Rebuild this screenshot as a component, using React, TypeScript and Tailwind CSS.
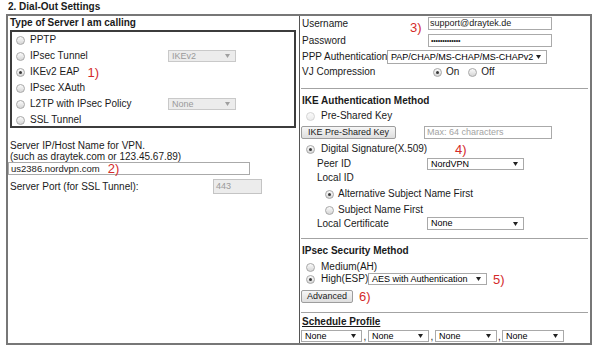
import React from "react";

const red = "text-[#d42a2a] text-[13px] leading-none";

function Radio({ checked = false, faded = false }: { checked?: boolean; faded?: boolean }) {
  return (
    <span
      className={`inline-flex items-center justify-center w-[9px] h-[9px] shrink-0 rounded-full border bg-linear-to-b ${
        faded ? "border-[#d4d4d4] from-[#fafafa] to-[#ececec]" : "border-[#a8a8a8] from-[#fbfbfb] to-[#d6d6d6]"
      }`}
    >
      {checked && <span className="w-[3px] h-[3px] rounded-full bg-[#3a3a3a]" />}
    </span>
  );
}

function Caret({ color = "#222" }: { color?: string }) {
  return (
    <svg width="5" height="4" viewBox="0 0 5 4" className="shrink-0">
      <path d="M0 0h5L2.5 4z" fill={color} />
    </svg>
  );
}

function Select({ value, w, h = 12, disabled = false }: { value: string; w: string; h?: number; disabled?: boolean }) {
  return (
    <div
      className={`flex shrink-0 items-center justify-between pl-[3px] pr-[5px] border overflow-hidden text-[9px] ${w} ${
        disabled ? "bg-[#ececec] border-[#c9c9c9] text-[#9a9a9a]" : "bg-white border-[#a9a9a9] text-black"
      }`}
      style={{ height: h }}
    >
      <span className="leading-none whitespace-nowrap">{value}</span>
      <Caret color={disabled ? "#a0a0a0" : "#222"} />
    </div>
  );
}

function Btn({ children, w }: { children: React.ReactNode; w: string }) {
  return (
    <div
      className={`flex shrink-0 items-center justify-center h-[13px] ${w} text-[9px] border border-[#9d9d9d] rounded-[2px] bg-linear-to-b from-[#f6f6f6] to-[#dedede] leading-none whitespace-nowrap`}
    >
      {children}
    </div>
  );
}

function Sep() {
  return <div className="h-px bg-[#a3a3a3] mr-[2px]" />;
}

export default function App() {
  return (
    <div
      className="w-[598px] h-[347px] bg-white text-[10px] text-[#1a1a1a] overflow-hidden whitespace-nowrap"
      style={{ fontFamily: '"Liberation Sans", Arial, sans-serif' }}
    >
      <div className="h-[14px] pl-[8px] pt-[1px] font-bold leading-[12px]">2. Dial-Out Settings</div>

      <div className="ml-[6px] w-[586px] h-[331px] border-2 border-[#777] flex">
        {/* Left column */}
        <div className="w-[292px] shrink-0 border-r border-[#555] flex flex-col">
          <div className="h-[12px] pl-[2px] pt-[1px] font-bold leading-[11px]">Type of Server I am calling</div>
          <div className="mt-[2px] ml-[2px] w-[286px] h-[98px] border-2 border-[#3c3c3c] flex flex-col">
            {[
              { label: "PPTP" },
              { label: "IPsec Tunnel", sel: "IKEv2" },
              { label: "IKEv2 EAP", checked: true, note: "1)" },
              { label: "IPsec XAuth" },
              { label: "L2TP with IPsec Policy", sel: "None" },
              { label: "SSL Tunnel" },
            ].map((r) => (
              <div key={r.label} className="h-[16px] shrink-0 flex items-center">
                <div className="w-[156px] shrink-0 flex items-center pl-[4px] gap-[5px]">
                  <Radio checked={r.checked} />
                  <span className="leading-none">{r.label}</span>
                  {r.note && <span className={`${red} ml-[3px]`}>{r.note}</span>}
                </div>
                {r.sel && <Select value={r.sel} w="w-[68px]" h={12} disabled />}
              </div>
            ))}
          </div>

          <div className="mt-[12px] h-[22px] pl-[2px] leading-[11px]">
            <div>Server IP/Host Name for VPN.</div>
            <div>(such as draytek.com or 123.45.67.89)</div>
          </div>
          <div className="w-[242px] h-[13px] border border-[#aaa] flex items-center pl-[2px] gap-[8px]">
            <span className="leading-none text-[9.5px]">us2386.nordvpn.com</span>
            <span className={red}>2)</span>
          </div>
          <div className="mt-[4px] h-[15px] flex items-center">
            <span className="w-[205px] shrink-0 pl-[2px] leading-none">Server Port (for SSL Tunnel):</span>
            <div className="w-[49px] h-[15px] border border-[#c4c4c4] bg-[#ececec] text-[#9a9a9a] text-[9px] flex items-center pl-[2px] leading-none">
              443
            </div>
          </div>
        </div>

        {/* Right column */}
        <div className="flex-1 flex flex-col pl-[1px]">
          <div className="mt-[1px] h-[13px] flex items-center">
            <span className="w-[109px] shrink-0 pl-[1px] leading-none">Username</span>
            <span className={`${red} w-[18px] shrink-0 mt-[8px]`}>3)</span>
            <div className="w-[124px] h-[13px] border border-[#aaa] flex items-center pl-[1px] text-[9px] leading-none">
              support@draytek.de
            </div>
          </div>
          <div className="mt-[4px] h-[13px] flex items-center">
            <span className="w-[127px] shrink-0 pl-[1px] leading-none">Password</span>
            <div className="w-[124px] h-[13px] border border-[#aaa] flex items-center pl-[2px] text-[7px] leading-none tracking-[-0.2px]">
              •••••••••••••
            </div>
          </div>
          <div className="mt-[3px] h-[14px] flex items-center">
            <span className="w-[86px] shrink-0 pl-[1px] leading-none">PPP Authentication</span>
            <Select value="PAP/CHAP/MS-CHAP/MS-CHAPv2" w="w-[160px]" h={14} />
          </div>
          <div className="h-[16px] flex items-center">
            <span className="w-[132px] shrink-0 pl-[1px] leading-none">VJ Compression</span>
            <Radio checked />
            <span className="ml-[4px] leading-none">On</span>
            <span className="ml-[9px] flex">
              <Radio />
            </span>
            <span className="ml-[4px] leading-none">Off</span>
          </div>

          <div className="mt-[8px]">
            <Sep />
          </div>

          <div className="mt-[6px] h-[12px] pl-[1px] flex items-center font-bold leading-none">IKE Authentication Method</div>
          <div className="mt-[3px] h-[12px] flex items-center pl-[5px] gap-[6px]">
            <Radio faded />
            <span className="leading-none">Pre-Shared Key</span>
          </div>
          <div className="mt-[4px] h-[13px] flex items-center">
            <Btn w="w-[95px]">IKE Pre-Shared Key</Btn>
            <div className="ml-[28px] w-[128px] h-[13px] border border-[#aaa] flex items-center pl-[2px] text-[9px] text-[#a3a3a3] leading-none">
              Max: 64 characters
            </div>
          </div>
          <div className="mt-[4px] h-[12px] flex items-center pl-[5px]">
            <Radio checked />
            <span className="ml-[6px] w-[134px] shrink-0 leading-none">Digital Signature(X.509)</span>
            <span className={red}>4)</span>
          </div>
          <div className="mt-[3px] h-[12px] flex items-center">
            <span className="w-[126px] shrink-0 pl-[16px] leading-none">Peer ID</span>
            <Select value="NordVPN" w="w-[97px]" h={12} />
          </div>
          <div className="mt-[2px] h-[12px] flex items-center pl-[16px] leading-none">Local ID</div>
          <div className="mt-[4px] h-[12px] flex items-center pl-[24px] gap-[4px]">
            <Radio checked />
            <span className="leading-none">Alternative Subject Name First</span>
          </div>
          <div className="mt-[4px] h-[12px] flex items-center pl-[24px] gap-[4px]">
            <Radio />
            <span className="leading-none">Subject Name First</span>
          </div>
          <div className="mt-[1px] h-[13px] flex items-center">
            <span className="w-[126px] shrink-0 pl-[16px] leading-none">Local Certificate</span>
            <Select value="None" w="w-[97px]" h={13} />
          </div>

          <div className="mt-[8px]">
            <Sep />
          </div>

          <div className="mt-[6px] h-[12px] pl-[1px] flex items-center font-bold leading-none">IPsec Security Method</div>
          <div className="mt-[4px] h-[12px] flex items-center pl-[5px] gap-[6px]">
            <Radio />
            <span className="leading-none">Medium(AH)</span>
          </div>
          <div className="h-[12px] flex items-center pl-[5px]">
            <Radio checked />
            <span className="ml-[6px] w-[47px] shrink-0 leading-none">High(ESP)</span>
            <Select value="AES with Authentication" w="w-[119px]" h={12} />
            <span className={`${red} ml-[6px]`}>5)</span>
          </div>
          <div className="mt-[5px] h-[13px] flex items-center">
            <Btn w="w-[52px]">Advanced</Btn>
            <span className={`${red} ml-[6px]`}>6)</span>
          </div>

          <div className="mt-[9px]">
            <Sep />
          </div>

          <div className="mt-[3px] h-[12px] pl-[1px] flex items-center font-bold underline leading-none">Schedule Profile</div>
          <div className="mt-[2px] h-[12px] flex items-end">
            <Select value="None" w="w-[61px]" h={12} />
            <span className="w-[6px] text-center leading-none">,</span>
            <Select value="None" w="w-[61px]" h={12} />
            <span className="w-[6px] text-center leading-none">,</span>
            <Select value="None" w="w-[62px]" h={12} />
            <span className="w-[5px] text-center leading-none">,</span>
            <Select value="None" w="w-[62px]" h={12} />
          </div>
        </div>
      </div>
    </div>
  );
}
